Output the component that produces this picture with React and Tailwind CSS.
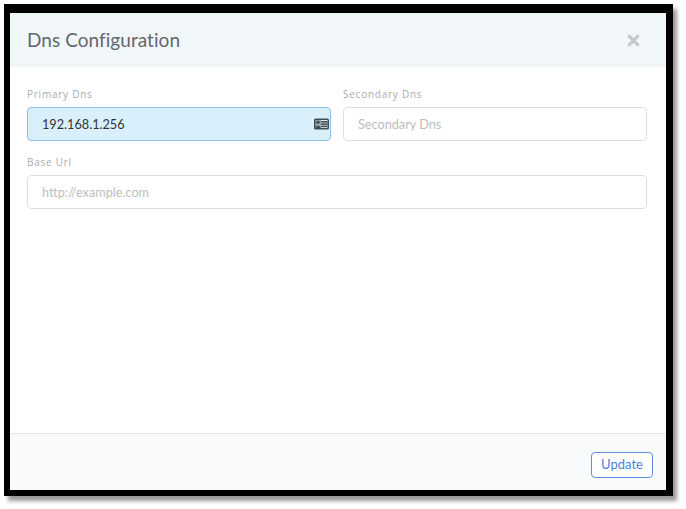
import React from 'react';

// id card glyph, solid with person on the left and lines on the right
function IdCardIcon() {
  return (
    <svg width="15" height="12" viewBox="0 0 15 12">
      <rect x="0" y="0.5" width="15" height="11" rx="1.5" fill="#454d51" />
      <rect x="6.5" y="2" width="7" height="8" fill="#d9f0fc" />
      <rect x="1.5" y="2" width="5" height="8" fill="#9db1bb" />
      <circle cx="4" cy="4.3" r="1.8" fill="#454d51" />
      <path d="M1.5 10 C1.5 6.6 6.5 6.6 6.5 10 Z" fill="#454d51" />
      <rect x="7" y="3" width="6.5" height="1.6" fill="#454d51" />
      <rect x="7" y="5.3" width="6.5" height="1.6" fill="#454d51" />
      <rect x="7" y="7.6" width="6.5" height="1.6" fill="#454d51" />
    </svg>
  );
}

function CloseIcon() {
  return (
    <svg width="13" height="13" viewBox="0 0 13 13">
      <path d="M2.4 2.4 L10.6 10.6 M10.6 2.4 L2.4 10.6" stroke="#c3cacd" strokeWidth="3.4" strokeLinecap="round" />
    </svg>
  );
}

function Field({ label, placeholder, value, icon, active }) {
  return (
    <div className="flex-1 min-w-0">
      <label className="block h-[20px] text-[10px] leading-[14px] tracking-[0.75px] text-[#ababab] font-['Open_Sans',sans-serif]">{label}</label>
      <div
        className={`flex items-center h-[34px] rounded-[4px] border pl-[14px] pr-px text-[12.7px] ${
          active ? 'bg-[#d9f0fc] border-[#8fc1de] text-[#333333]' : 'bg-white border-[#dcdfdf] text-[#bdbdbd]'
        }`}
      >
        <span className="flex-1 pt-px">{value || placeholder}</span>
        {icon && <IdCardIcon />}
      </div>
    </div>
  );
}

export default function App() {
  return (
    <div className="w-[686px] h-[509px] bg-white pt-1 pl-1 font-['Lato',sans-serif]">
      <div className="w-[669px] h-[492px] flex flex-col border-solid border-black border-t-[9px] border-l-[6px] border-r-[7px] border-b-[6px] shadow-[4px_5px_4px_rgba(0,0,0,0.4)] bg-white">
        {/* Header */}
        <header className="flex items-center justify-between h-[54px] pl-[17px] pr-[26px] bg-[#f1f6f9] shrink-0">
          <h1 className="text-[19px] pt-px tracking-[0.05px] text-[#62686a] font-normal">Dns Configuration</h1>
          <CloseIcon />
        </header>
        <main className="flex-1 pl-[17px] pr-[19px] pt-[20px]">
          <div className="flex gap-[12px]">
            <Field label="Primary Dns" value="192.168.1.256" icon active />
            <Field label="Secondary Dns" placeholder="Secondary Dns" />
          </div>
          <div className="flex mt-[14px]">
            <Field label="Base Url" placeholder="http://example.com" />
          </div>
        </main>
        {/* Footer */}
        <footer className="flex items-center justify-end h-[57px] pr-[13px] pt-[6px] bg-[#f9fafc] border-t border-[#e2e2e2] shrink-0">
          <button className="h-[26px] w-[62px] rounded-[4px] border border-[#5f8ee0] bg-white text-[13px] text-[#4d7fd9]">Update</button>
        </footer>
      </div>
    </div>
  );
}
